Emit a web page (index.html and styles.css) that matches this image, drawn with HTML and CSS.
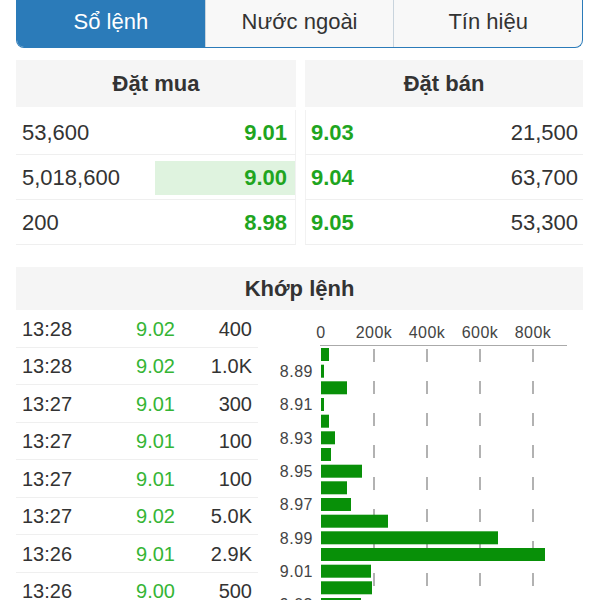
FILE: index.html
```html
<!DOCTYPE html>
<html lang="vi">
  <head>
    <meta charset="UTF-8" />
    <meta name="viewport" content="width=device-width, initial-scale=1.0" />
    <title>Sổ lệnh</title>
    <link rel="stylesheet" href="styles.css">
  </head>
  <body>
    <div class="page">
      <nav class="tabs">
        <div class="tab active">Sổ lệnh</div>
        <div class="tab">Nước ngoài</div>
        <div class="tab">Tín hiệu</div>
      </nav>

      <div class="book">
        <div class="side buy">
          <div class="head">Đặt mua</div>
          <div class="row"><span class="vol">53,600</span><span class="price">9.01</span></div>
          <div class="row"><span class="vol">5,018,600</span><span class="price hot">9.00</span></div>
          <div class="row"><span class="vol">200</span><span class="price">8.98</span></div>
        </div>
        <div class="side sell">
          <div class="head">Đặt bán</div>
          <div class="row"><span class="price">9.03</span><span class="vol">21,500</span></div>
          <div class="row"><span class="price">9.04</span><span class="vol">63,700</span></div>
          <div class="row"><span class="price">9.05</span><span class="vol">53,300</span></div>
        </div>
      </div>

      <div class="head match-head">Khớp lệnh</div>
      <div class="match">
        <div class="trades">
          <div class="trade"><span>13:28</span><span class="up">9.02</span><span>400</span></div>
          <div class="trade"><span>13:28</span><span class="up">9.02</span><span>1.0K</span></div>
          <div class="trade"><span>13:27</span><span class="up">9.01</span><span>300</span></div>
          <div class="trade"><span>13:27</span><span class="up">9.01</span><span>100</span></div>
          <div class="trade"><span>13:27</span><span class="up">9.01</span><span>100</span></div>
          <div class="trade"><span>13:27</span><span class="up">9.02</span><span>5.0K</span></div>
          <div class="trade"><span>13:26</span><span class="up">9.01</span><span>2.9K</span></div>
          <div class="trade"><span>13:26</span><span class="up">9.00</span><span>500</span></div>
        </div>
        <div class="chart">
          <svg width="325" height="290" viewBox="0 0 325 290">
            <g class="axis-text" text-anchor="middle">
              <text x="63" y="28">0</text>
              <text x="116" y="28">200k</text>
              <text x="169" y="28">400k</text>
              <text x="222" y="28">600k</text>
              <text x="275" y="28">800k</text>
            </g>
            <line class="axis" x1="62" y1="35.5" x2="309" y2="35.5" />
            <g class="grid">
              <line x1="116" y1="39" x2="116" y2="290" />
              <line x1="169" y1="39" x2="169" y2="290" />
              <line x1="222" y1="39" x2="222" y2="290" />
              <line x1="275" y1="39" x2="275" y2="290" />
            </g>
            <g class="bars">
              <rect x="63" y="38" width="8" height="13" />
              <rect x="63" y="54.7" width="3" height="13" />
              <rect x="63" y="71.3" width="26" height="13" />
              <rect x="63" y="88" width="3" height="13" />
              <rect x="63" y="104.7" width="8" height="13" />
              <rect x="63" y="121.3" width="14" height="13" />
              <rect x="63" y="138" width="10" height="13" />
              <rect x="63" y="154.7" width="41" height="13" />
              <rect x="63" y="171.3" width="26" height="13" />
              <rect x="63" y="188" width="30" height="13" />
              <rect x="63" y="204.7" width="67" height="13" />
              <rect x="63" y="221.3" width="177" height="13" />
              <rect x="63" y="238" width="224" height="13" />
              <rect x="63" y="254.7" width="50" height="13" />
              <rect x="63" y="271.3" width="51" height="13" />
              <rect x="63" y="288" width="40" height="13" />
            </g>
            <g class="axis-text" text-anchor="end">
              <text x="55" y="67">8.89</text>
              <text x="55" y="100.3">8.91</text>
              <text x="55" y="133.7">8.93</text>
              <text x="55" y="167">8.95</text>
              <text x="55" y="200.3">8.97</text>
              <text x="55" y="233.7">8.99</text>
              <text x="55" y="267">9.01</text>
              <text x="55" y="300.3">9.03</text>
            </g>
          </svg>
        </div>
      </div>
    </div>
  </body>
</html>
```

FILE: styles.css
```css
* {
  box-sizing: border-box;
  padding: 0;
  margin: 0;
}
body {
  font-family: "Liberation Sans", Arial, sans-serif;
  color: #333;
  background: white;
  overflow: hidden;
}
.page {
  padding: 0 17px 0 16px;
}

/* segmented tabs */
.tabs {
  display: flex;
  height: 48px;
  border: 1px solid #2b7bb9;
  border-top: 0;
  border-radius: 0 0 8px 8px;
  overflow: hidden;
  background: #f8f8f8;
}
.tab {
  flex: 1;
  text-align: center;
  font-size: 22px;
  line-height: 44px;
  padding-bottom: 3px;
  border-left: 1px solid #c9d4dd;
}
.tab:first-child {
  border-left: 0;
}
.tab.active {
  background: #2b7bb9;
  color: white;
}

/* order book */
.head {
  background: #f5f5f5;
  font-weight: bold;
  font-size: 22px;
  text-align: center;
}
.book {
  display: grid;
  grid-template-columns: 280px 1fr;
  gap: 9px;
  margin-top: 12px;
}
.side .head {
  height: 47px;
  line-height: 47px;
  margin-bottom: 3px;
}
.row {
  display: flex;
  justify-content: space-between;
  align-items: center;
  height: 45px;
  padding-top: 2px;
  font-size: 22px;
  border-bottom: 1px solid #efefef;
}
.buy .row {
  padding-left: 6px;
  border-right: 1px solid #f2f2f2;
}
.sell .row {
  padding-left: 5px;
  padding-right: 5px;
  border-left: 1px solid #f2f2f2;
}
.price {
  color: #1fa51f;
  font-weight: bold;
}
.buy .price {
  padding-right: 8px;
}
.price.hot {
  width: 140px;
  line-height: 34px;
  text-align: right;
  background: #dff3df;
}

/* matched orders */
.match-head {
  margin-top: 22px;
  height: 43px;
  line-height: 43px;
}
.match {
  display: flex;
}
.trades {
  width: 242px;
  flex: none;
}
.trade {
  display: grid;
  grid-template-columns: 1fr 60px 77px;
  align-items: center;
  height: 37.5px;
  padding: 2px 6px 0;
  font-size: 20px;
  border-bottom: 1px solid #efefef;
}
.trade span {
  text-align: right;
}
.trade span:first-child {
  text-align: left;
}
.up {
  color: #35b535;
}
.chart {
  flex: 1;
}
.chart svg {
  display: block;
}
.axis-text {
  font-size: 16px;
  letter-spacing: 0.5px;
  fill: #444;
}
.axis {
  stroke: #aaa;
  stroke-width: 1;
}
.grid line {
  stroke: #999;
  stroke-width: 1.5;
  stroke-dasharray: 13 19;
}
.bars rect {
  fill: #089008;
}
```
